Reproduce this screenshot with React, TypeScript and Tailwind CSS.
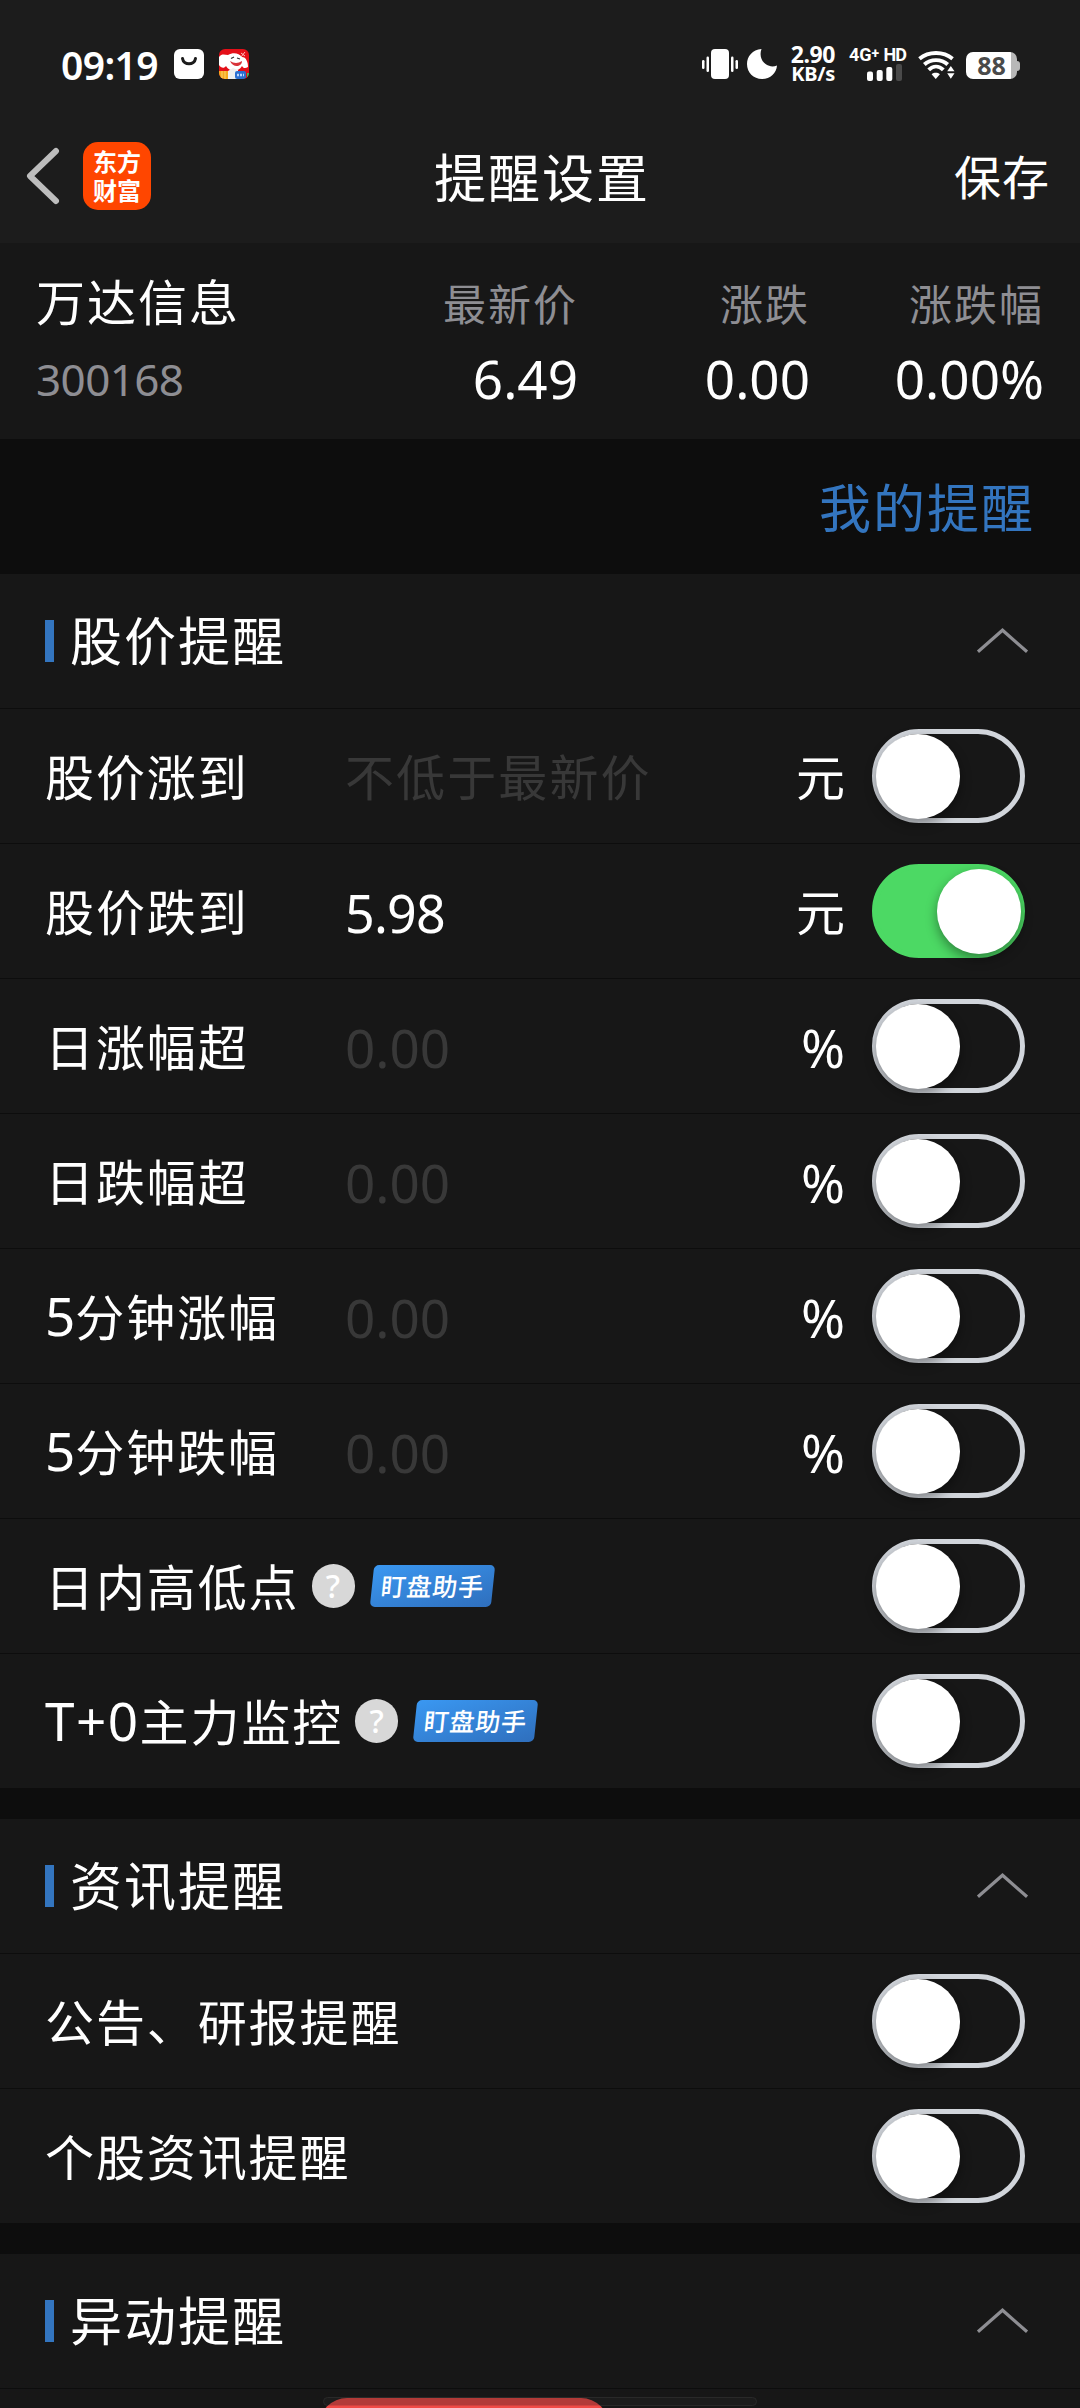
import type { ReactNode } from "react";

function Txt({ children, className = "" }: { children: ReactNode; className?: string }) {
  return <span className={"block whitespace-nowrap " + className}>{children}</span>;
}

function StatusBar() {
  return (
    <div className="flex h-[128px] items-center pl-[61px] pr-[60px]">
      <Txt className="w-[98px] text-[39px] font-semibold leading-none tracking-[-0.6px]">09:19</Txt>
      <svg className="ml-[15px] h-[30px] w-[30px]" viewBox="0 0 30 30">
        <rect width="30" height="30" rx="6" fill="#fff" />
        <path d="M8.500 9.500c1 7 12 7 13 0" fill="none" stroke="#1c1c1c" strokeWidth="3" strokeLinecap="round" />
      </svg>
      <svg className="ml-[15px] h-[30px] w-[30px]" viewBox="0 0 30 30">
        <clipPath id="dog"><rect width="30" height="30" rx="6" /></clipPath>
        <g clipPath="url(#dog)">
          <rect width="30" height="30" fill="#e40f18" />
          <path d="M0 8C3 4 6 6 9 6c5-3 11-2 14 2 4 0 6 5 6 10-3 2-5 1-6-1-3 6-13 6-16 0-2 3-5 2-7-1z" fill="#fff" />
          <path d="M11 12c4 2.500 8 2.500 12 0 0 6-9 7.500-12 0z" fill="#d8333a" />
          <path d="M12 9.500l3-1.500M18 9l3 1" stroke="#333" strokeWidth="1.300" />
          <path d="M22 4l4 3m0-4l-4 5" stroke="#fbb" strokeWidth="1" />
          <path d="M9 22l5-3 5 2v9H9z" fill="#eee" />
          <rect y="22" width="9" height="8" fill="#f7a91e" />
          <path d="M3 22v8M6 22v8" stroke="#fbd36a" strokeWidth="1" />
          <rect x="16" y="22" width="11" height="8" rx="2" fill="#2b6fd0" />
          <path d="M18 26h7" stroke="#bcd6ff" strokeWidth="2.500" strokeDasharray="2 1" />
          <rect x="28" y="24" width="2" height="4" fill="#3dbb5b" />
        </g>
      </svg>
      <div className="ml-auto flex items-center">
        <svg className="h-[32px] w-[36px]" viewBox="0 0 36 32" fill="#fff">
          <rect x="9" y="1" width="18" height="30" rx="4" />
          <rect x="4.500" y="8.500" width="2.500" height="15.500" rx="1.200" />
          <rect x="0" y="12" width="2.500" height="9" rx="1.200" />
          <rect x="29" y="8.500" width="2.500" height="15.500" rx="1.200" />
          <rect x="33.500" y="12" width="2.500" height="9" rx="1.200" />
        </svg>
        <svg className="ml-[9px] h-[32px] w-[30px]" viewBox="0 0 30 32">
          <path d="M14.500 1C5.500 1.500 0 8.500 0 16c0 8.500 6.500 15 15 15s14.500-6 15-13.500C20 21.500 10.500 11.500 14.500 1z" fill="#fff" />
        </svg>
        <div className="ml-[13px] flex w-[45px] flex-col items-end">
          <Txt className="text-[23px] font-bold leading-[19px] tracking-[-0.4px]">2.90</Txt>
          <Txt className="text-[20px] font-bold leading-[19px] tracking-[-0.3px]">KB/s</Txt>
        </div>
        <div className="ml-[14px] flex w-[57px] flex-col">
          <div className="flex justify-between font-['Roboto'] text-[18px] font-bold leading-[16px]">
            <Txt>4G<span className="relative -top-[3px] text-[14px] leading-[0]">+</span></Txt>
            <Txt className="tracking-[-1px]">HD</Txt>
          </div>
          <svg className="ml-[18px] mt-[1px] h-[17px] w-[36px]" viewBox="0 0 36 17">
            <rect y="7.500" width="6" height="9.500" rx="2" fill="#fff" />
            <rect x="9.700" y="6" width="6" height="11" rx="2" fill="#fff" />
            <rect x="19.300" y="3" width="6" height="14" rx="2" fill="#fff" />
            <rect x="29" width="6" height="17" rx="2" fill="#4a4a4a" />
          </svg>
        </div>
        <svg className="ml-[12px] mt-[1px] h-[30px] w-[37px]" viewBox="0 0 38 30" fill="none" stroke="#fff" strokeWidth="4">
          <path d="M1.500 8.500C11 .8 26 .8 35.500 8.500" />
          <path d="M6.500 14.500C13 8.500 24 8.500 30.500 14.500" />
          <path d="M11 20C15.500 15.500 21.500 15.500 26 20" />
          <path d="M14 24.500c2.500-2 6-2 8.500 0L18.200 29.500z" fill="#fff" stroke="none" />
          <path d="M30 21.500h7.500L33.700 16zM30 23.500h7.500L33.700 29z" fill="#fff" stroke="none" />
        </svg>
        <div className="ml-[11px] mt-[3px] flex items-center">
          <div className="flex h-[27px] w-[51px] items-center justify-center rounded-[7px] bg-gradient-to-r from-white from-[88%] to-[#b8b8b8] to-[88%]">
            <Txt className="text-[25px] font-bold leading-none text-[#4a4a4a]">88</Txt>
          </div>
          <div className="h-[10px] w-[3px] rounded-r-[3px] bg-[#b8b8b8]" />
        </div>
      </div>
    </div>
  );
}

function Header() {
  return (
    <div className="grid h-[115px] grid-cols-3 items-center pb-[20px] pl-[26px] pr-[30px]">
      <div className="flex items-center">
        <svg className="h-[58px] w-[34px]" viewBox="0 0 34 58">
          <path d="M30 4L4 29l26 25" fill="none" stroke="#bdbdbd" strokeWidth="6" strokeLinecap="round" strokeLinejoin="round" />
        </svg>
        <div className="ml-[23px] flex h-[68px] w-[68px] flex-col items-center justify-center rounded-[15px] bg-[#ff4600] text-[24px] font-bold leading-[29px]">
          <Txt>东方</Txt>
          <Txt>财富</Txt>
        </div>
      </div>
      <Txt className="pl-[8px] pt-[4px] text-center text-[52px] leading-none tracking-[2px]">提醒设置</Txt>
      <Txt className="pt-[3px] text-right text-[47px] leading-none tracking-[1px]">保存</Txt>
    </div>
  );
}

function QuoteCell({ label, value, className }: { label: string; value: string; className: string }) {
  return (
    <div className={"flex flex-col items-end " + className}>
      <Txt className="text-[43px] leading-[62px] tracking-[2px] text-[#8e8e93]">{label}</Txt>
      <Txt className="mt-[13px] text-[53px] leading-[60px]">{value}</Txt>
    </div>
  );
}

function Quote() {
  return (
    <div className="flex h-[196px] bg-[#171717] pl-[36px] pr-[36px] pt-[31px]">
      <div className="w-[260px]">
        <Txt className="text-[49px] leading-[57px] tracking-[2px]">万达信息</Txt>
        <Txt className="mt-[18px] text-[44px] leading-[60px] tracking-[-0.6px] text-[#8e8e93]">300168</Txt>
      </div>
      <QuoteCell className="w-[282px]" label="最新价" value="6.49" />
      <QuoteCell className="w-[232px]" label="涨跌" value="0.00" />
      <QuoteCell className="w-[234px]" label="涨跌幅" value="0.00%" />
    </div>
  );
}

function Toggle({ on = false }: { on?: boolean }) {
  return (
    <div className={"flex h-[94px] w-[153px] items-center rounded-full border-[5px] " + (on ? "justify-end border-[#4cd964] bg-[#4cd964]" : "border-[#d1d5db]")}>
      <div className={"h-[85px] w-[84px] shrink-0 rounded-full bg-white shadow-[0_5px_12px_rgba(0,0,0,0.4)] " + (on ? "-mr-px" : "-ml-px")} />
    </div>
  );
}

function SectionTitle({ children }: { children: ReactNode }) {
  return (
    <div className="flex h-[135px] items-center border-b border-[#0d0d0d] bg-[#171717] pl-[45px] pr-[51px]">
      <div className="h-[42px] w-[9px] bg-[#3375bf]" />
      <Txt className="ml-[16px] text-[52px] leading-none tracking-[2px]">{children}</Txt>
      <svg className="ml-auto h-[28px] w-[53px]" viewBox="0 0 54 28">
        <path d="M2 25L27 3l25 22" fill="none" stroke="#8e8e93" strokeWidth="3.200" />
      </svg>
    </div>
  );
}

type RowData = { label: string; prefix?: string; value?: string; unit?: string; on?: boolean; filled?: boolean; helper?: boolean };

function Row({ label, prefix, value, unit, on, filled, helper }: RowData) {
  return (
    <div className="flex h-[135px] items-center border-b border-[#0d0d0d] bg-[#171717] pl-[45px] pr-[55px]">
      <div className={value ? "w-[300px]" : ""}>
        <Txt className="pt-[3px] text-[49px] leading-none tracking-[1.900px]">
          {prefix && <span className={"text-[53px] leading-[0] " + (helper ? "tracking-[1.500px]" : "tracking-[0px]")}>{prefix}</span>}
          {label}
        </Txt>
      </div>
      {value && (
        <Txt className={"pt-[3px] leading-none " + (filled ? "text-[52px] tracking-[-0.8px]" : unit === "%" ? "text-[53px] text-[#383838]" : "text-[49px] tracking-[2.100px] text-[#383838]")}>
          {value}
        </Txt>
      )}
      {helper && (
        <>
          <div className="ml-[12px] flex h-[44px] w-[43px] items-center justify-center rounded-full bg-[#d8d8d8]">
            <Txt className="text-[32px] font-medium leading-none">?</Txt>
          </div>
          <div className="ml-[17px] flex h-[42px] w-[121px] -skew-x-6 items-center justify-center rounded-[5px] bg-gradient-to-br from-[#3a98f2] to-[#2f6fbd]">
            <Txt className="text-[25px] font-medium leading-none tracking-[0.700px]">盯盘助手</Txt>
          </div>
        </>
      )}
      <div className="ml-auto flex items-center">
        {unit && <Txt className={"mr-[27px] pt-[3px] leading-none " + (unit === "%" ? "text-[53px]" : "text-[49px]")}>{unit}</Txt>}
        <Toggle on={on} />
      </div>
    </div>
  );
}

const priceRows: RowData[] = [
  { label: "股价涨到", value: "不低于最新价", unit: "元" },
  { label: "股价跌到", value: "5.98", unit: "元", on: true, filled: true },
  { label: "日涨幅超", value: "0.00", unit: "%" },
  { label: "日跌幅超", value: "0.00", unit: "%" },
  { prefix: "5", label: "分钟涨幅", value: "0.00", unit: "%" },
  { prefix: "5", label: "分钟跌幅", value: "0.00", unit: "%" },
  { label: "日内高低点", helper: true },
  { prefix: "T+0", label: "主力监控", helper: true },
];

export default function App() {
  return (
    <div className="h-[2408px] w-[1080px] overflow-hidden bg-[#0d0d0d] font-['Noto_Sans','Noto_Sans_CJK_SC',sans-serif] text-white">
      <div className="bg-[#1c1c1c]">
        <StatusBar />
        <Header />
      </div>
      <Quote />
      <div className="flex h-[135px] items-center justify-end pr-[45px] pt-[2px]">
        <Txt className="text-[52px] leading-none tracking-[2px] text-[#3375bf]">我的提醒</Txt>
      </div>
      <SectionTitle>股价提醒</SectionTitle>
      {priceRows.map((r) => <Row key={r.label} {...r} />)}
      <div className="h-[30px]" />
      <SectionTitle>资讯提醒</SectionTitle>
      <Row label="公告、研报提醒" />
      <Row label="个股资讯提醒" />
      <div className="h-[30px]" />
      <SectionTitle>异动提醒</SectionTitle>
      <div className="flex h-[19px] bg-[#171717] pl-[323px] pt-[8px]">
        <div className="flex h-[9px] w-[434px] rounded-[5px] border border-[#292929] bg-[#1c1c1c]">
          <div className="-ml-[5px] h-[40px] w-[290px] shrink-0 rounded-t-[28px] bg-gradient-to-b from-[#b23a38] from-[7px] to-[#f04a46] to-[8px]" />
        </div>
      </div>
    </div>
  );
}
